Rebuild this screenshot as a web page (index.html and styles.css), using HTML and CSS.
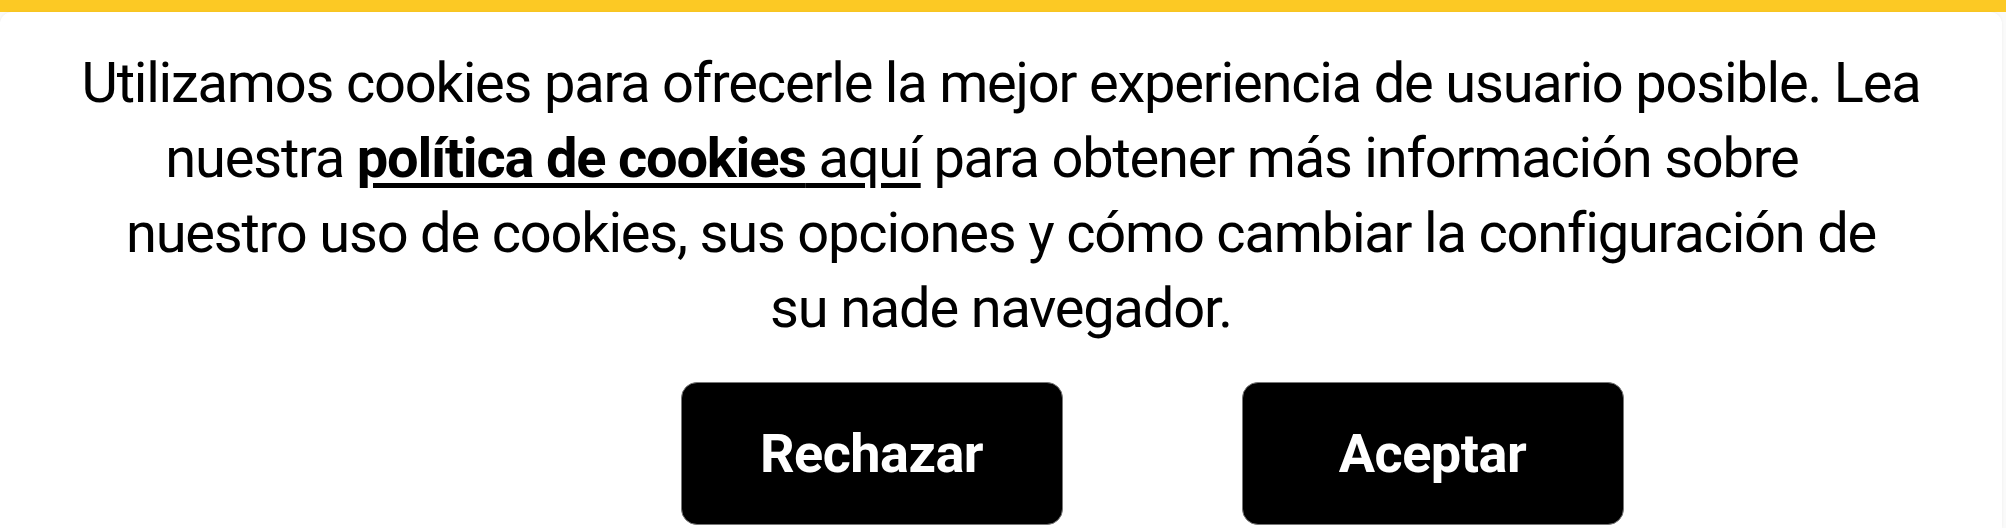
FILE: index.html
```html
<!DOCTYPE html>
<html>
	<head>
		<meta charset="UTF-8">
		<title>Cookies</title>
		<link rel="stylesheet" href="styles.css">
	</head>
	<body>
		<div class="topbar"></div>
		<div class="cookie-box">
			<p class="cookie-text">
				Utilizamos cookies para ofrecerle la mejor experiencia de usuario posible. Lea<br>
				nuestra <a href="#" class="policy"><b>política de cookies</b> aquí</a> para obtener más información sobre&nbsp;&nbsp;&nbsp;<br>
				nuestro uso de cookies, sus opciones y cómo cambiar la configuración de<br>
				su nade navegador.
			</p>
			<div class="actions">
				<a href="javascript:;" class="btn">Rechazar</a>
				<a href="javascript:;" class="btn">Aceptar</a>
			</div>
		</div>
	</body>
</html>
```

FILE: styles.css
```css
*{
	padding:0px;margin:0px;
}
a{
	text-decoration: none;
}
body{
	background: #fafafa;
	font-family: Roboto, "Liberation Sans", sans-serif;
	color: #000;
	height: 528px;
	overflow: hidden;
}
.topbar{
	height: 12px;
	background-color: #fcc924;
}
.cookie-box{
	background: #fff;
	border-radius: 12px 12px 0 0;
	margin: 0 4px 0 0;
	height: 516px;
	box-shadow: 0 0 3px rgba(0,0,0,.06);
}
.cookie-text{
	padding-top: 34px;
	font-size: 56px;
	line-height: 75px;
	letter-spacing: -1.2px;
	text-align: center;
}
.policy{
	color: #000;
	text-decoration: underline;
	text-underline-offset: 6px;
}
.actions{
	display: flex;
	justify-content: center;
	gap: 179px;
	padding-left: 302px;
	margin-top: 36px;
}
.btn{
	display: flex;
	align-items: center;
	justify-content: center;
	width: 382px;
	height: 143px;
	box-sizing: border-box;
	background-color: #000;
	border: 1px solid #777;
	border-radius: 16px;
	color: #fff;
	font-size: 54px;
	font-weight: bold;
	letter-spacing: -0.5px;
}
```
